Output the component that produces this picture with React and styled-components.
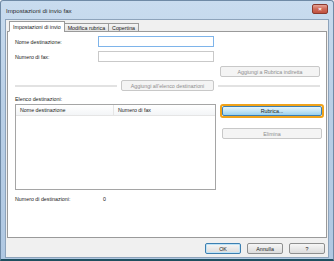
import React from 'react'
import styled, { createGlobalStyle } from 'styled-components'

const Global = createGlobalStyle`
  html, body { margin: 0; padding: 0; background: #ffffff; }
  body { font-family: "Liberation Sans", Arial, sans-serif; }
`

const Window = styled.div`
  width: 334px;
  height: 261px;
  box-sizing: border-box;
  display: flex;
  flex-direction: column;
  background: linear-gradient(180deg, #c9dcef 0%, #b9cfe6 40%, #b0c8e2 100%);
  border: 1px solid #6f8aa6;
  border-bottom: 2px solid #1f4f5f;
  border-radius: 3px 3px 0 0;
  color: #1a1a1a;
`

const TitleBar = styled.div`
  height: 19px;
  display: flex;
  align-items: center;
  justify-content: space-between;
  padding: 0 5px 0 5px;
  font-size: 6.2px;
  color: #2a2a2a;
`

const CloseBtn = styled.div`
  width: 14px;
  height: 8px;
  margin-top: -2px;
  border: 1px solid #8b3a2e;
  border-radius: 2px;
  background: linear-gradient(180deg, #e4a396 0%, #cf6a58 50%, #c0503f 100%);
  display: flex;
  align-items: center;
  justify-content: center;
  color: #ffffff;
  font-size: 6px;
  font-weight: bold;
  line-height: 1;
`

const Body = styled.div`
  flex: 1;
  margin: 0 4px 1px 4px;
  background: #f0f0f0;
  border: 1px solid #8da3bb;
  display: flex;
  flex-direction: column;
  padding: 1px 1px 3px 1px;
  font-size: 5.3px;
`

const TabStrip = styled.div`
  display: flex;
  height: 11px;
  align-items: flex-end;
  padding-left: 2px;
  position: relative;
  z-index: 1;
  margin-bottom: -1px;
`

const Tab = styled.div`
  height: ${p => (p.$active ? '11px' : '9px')};
  box-sizing: border-box;
  padding: 0 3px;
  display: flex;
  align-items: center;
  border: 1px solid #9a9a9a;
  border-bottom: ${p => (p.$active ? '1px solid #ffffff' : '1px solid #9a9a9a')};
  margin-left: ${p => (p.$active ? '0' : '-1px')};
  background: ${p => (p.$active ? '#ffffff' : 'linear-gradient(180deg, #f4f4f4, #e3e3e3)')};
`

const Panel = styled.div`
  height: 207px;
  box-sizing: border-box;
  background: #ffffff;
  border: 1px solid #9a9a9a;
  padding: 4px 6px 0 7px;
  display: flex;
  flex-direction: column;
`

const FieldRow = styled.div`
  display: flex;
  align-items: center;
  height: 11px;
  margin-bottom: ${p => p.$gap || 0}px;
`

const Label = styled.div`
  width: ${p => p.$w || 83}px;
`

const Input = styled.div`
  width: 116px;
  height: 11px;
  box-sizing: border-box;
  border: 1px solid ${p => (p.$focus ? '#7eb4ea' : '#c9c9c9')};
  background: #ffffff;
`

const RightRow = styled.div`
  display: flex;
  justify-content: flex-end;
  margin-top: 4px;
`

const Button = styled.div`
  width: ${p => p.$w}px;
  height: 11px;
  box-sizing: border-box;
  border: 1px solid ${p => (p.$disabled ? '#c8c8c8' : '#8e8f8f')};
  border-radius: 2px;
  background: ${p => (p.$disabled ? '#f4f4f4' : 'linear-gradient(180deg, #f6f6f6 0%, #e9e9e9 50%, #dcdcdc 100%)')};
  color: ${p => (p.$disabled ? '#8d8d8d' : '#1a1a1a')};
  display: flex;
  align-items: center;
  justify-content: center;
  white-space: nowrap;
`

const SepRow = styled.div`
  display: flex;
  align-items: center;
  margin-top: 3px;
  gap: 4px;
`

const Rule = styled.div`
  flex: 1;
  height: 2px;
  background: #e2e2e2;
`

const SectionLabel = styled.div`
  margin-top: 5px;
  height: 8px;
`

const ListArea = styled.div`
  display: flex;
  gap: 4px;
  margin-top: 0;
`

const ListBox = styled.div`
  width: 201px;
  height: 86px;
  box-sizing: border-box;
  border: 1px solid #a5a5a5;
  background: #ffffff;
`

const ListHeader = styled.div`
  display: flex;
  height: 10px;
  align-items: center;
  border-bottom: 1px solid #e5e5e5;
  background: linear-gradient(180deg, #ffffff, #f3f5f7);
`

const HeadCell = styled.div`
  width: ${p => p.$w}px;
  padding-left: 4px;
  box-sizing: border-box;
  border-right: ${p => (p.$last ? 'none' : '1px solid #e5e5e5')};
  height: 100%;
  display: flex;
  align-items: center;
`

const SideCol = styled.div`
  display: flex;
  flex-direction: column;
  align-items: center;
  width: 104px;
  gap: 10px;
`

const FocusRing = styled.div`
  border: 2px solid #f0a21a;
  border-radius: 3px;
`

const PrimaryButton = styled(Button)`
  height: 10px;
  border-color: #3c7fb1;
  background: linear-gradient(180deg, #e5f4fc 0%, #c4e5f6 50%, #98d1ef 100%);
`

const CountRow = styled.div`
  display: flex;
  margin-top: 6px;
`

const Footer = styled.div`
  display: flex;
  justify-content: flex-end;
  gap: 6px;
  padding: 5px 2px 0 0;
`

const DefaultButton = styled(Button)`
  border-color: #3c7fb1;
  box-shadow: inset 0 0 0 1px #bfe3f6;
`

export default function App() {
  return (
    <>
      <Global />
      <Window>
        <TitleBar>
          <span>Impostazioni di invio fax</span>
          <CloseBtn>×</CloseBtn>
        </TitleBar>
        <Body>
          <TabStrip>
            <Tab $active>Impostazioni di invio</Tab>
            <Tab>Modifica rubrica</Tab>
            <Tab>Copertina</Tab>
          </TabStrip>
          <Panel>
            <FieldRow $gap={4}>
              <Label>Nome destinazione:</Label>
              <Input $focus />
            </FieldRow>
            <FieldRow>
              <Label>Numero di fax:</Label>
              <Input />
            </FieldRow>
            <RightRow>
              <Button $w={100} $disabled>Aggiungi a Rubrica indiretta</Button>
            </RightRow>
            <SepRow>
              <Rule />
              <Button $w={93} $disabled>Aggiungi all'elenco destinazioni</Button>
              <Rule />
            </SepRow>
            <SectionLabel>Elenco destinazioni:</SectionLabel>
            <ListArea>
              <ListBox>
                <ListHeader>
                  <HeadCell $w={98}>Nome destinazione</HeadCell>
                  <HeadCell $w={101} $last>Numero di fax</HeadCell>
                </ListHeader>
              </ListBox>
              <SideCol>
                <FocusRing>
                  <PrimaryButton $w={100}>Rubrica...</PrimaryButton>
                </FocusRing>
                <Button $w={100} $disabled>Elimina</Button>
              </SideCol>
            </ListArea>
            <CountRow>
              <Label $w={88}>Numero di destinazioni:</Label>
              <span>0</span>
            </CountRow>
          </Panel>
          <Footer>
            <DefaultButton $w={36}>OK</DefaultButton>
            <Button $w={36}>Annulla</Button>
            <Button $w={36}>?</Button>
          </Footer>
        </Body>
      </Window>
    </>
  )
}
